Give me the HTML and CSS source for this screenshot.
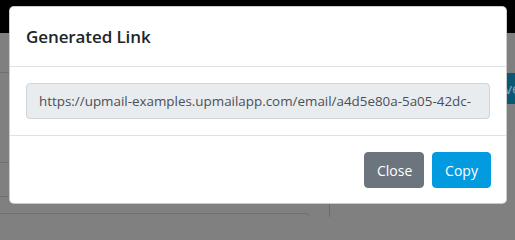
FILE: index.html
```html
<!DOCTYPE html>
<html lang="en">
<head>
<meta charset="utf-8">
<title>Generated Link</title>
<link rel="stylesheet" href="styles.css">
</head>
<body>
<div class="page">
  <div class="page-top"></div>
  <div class="page-main">
    <div class="left-col">
      <div class="row row-a"></div>
      <div class="row row-b"></div>
      <div class="row row-c"></div>
      <div class="box"></div>
    </div>
    <div class="right-col">
      <span class="bg-btn">Save</span>
    </div>
  </div>
</div>

<div class="modal" role="dialog" aria-labelledby="modal-title">
  <div class="modal-header">
    <h5 class="modal-title" id="modal-title">Generated Link</h5>
  </div>
  <div class="modal-body">
    <div class="input-wrap">
      <input class="link-input" type="text" readonly value="https://upmail-examples.upmailapp.com/email/a4d5e80a-5a05-42dc-9b1e-7c3f2d8a6e41">
    </div>
  </div>
  <div class="modal-footer">
    <button class="btn btn-close" type="button">Close</button>
    <button class="btn btn-copy" type="button">Copy</button>
  </div>
</div>
</body>
</html>
```
FILE: styles.css
```css
* { box-sizing: border-box; }

html, body {
  margin: 0;
  padding: 0;
  width: 515px;
  height: 217px;
  overflow: hidden;
  background: #808080;
  font-family: "Open Sans", "Liberation Sans", sans-serif;
}

.page {
  display: flex;
  flex-direction: column;
  height: 217px;
  overflow: hidden;
}

.page-top {
  height: 33px;
  background: #000;
  flex: none;
}

.page-main {
  flex: 1;
  min-height: 0;
  display: flex;
  overflow: hidden;
}

.left-col {
  width: 330px;
  border-right: 1px solid #6c6c6c;
  display: flex;
  flex-direction: column;
}

.row { border-bottom: 1px solid #707070; flex: none; }
.row-a { height: 40px; }
.row-b { height: 90px; }
.row-c { height: 34px; }

.box {
  flex: none;
  margin-top: 16px;
  width: 309px;
  height: 3px;
  border: 1px solid #707070;
  border-left: none;
  border-bottom: none;
  border-radius: 0 5px 0 0;
}

.right-col {
  flex: 1;
  overflow: hidden;
  padding: 40px 0 0 150px;
}

.bg-btn {
  display: block;
  width: 80px;
  height: 31px;
  background: #0b5874;
  color: #7fa6b6;
  font-size: 15px;
  line-height: 31px;
  padding-left: 8px;
  white-space: nowrap;
}

/* Modal overlays the backdrop */
.modal {
  position: absolute;
  left: 9px;
  top: 6px;
  width: 498px;
  background: #fff;
  border: 1px solid rgba(0, 0, 0, 0.2);
  border-radius: 5px;
  display: flex;
  flex-direction: column;
}

.modal-header {
  padding: 16px 16px 15px;
  border-bottom: 1px solid #dee2e6;
}

.modal-title {
  margin: 0;
  font-size: 17px;
  font-weight: 600;
  line-height: 28px;
  color: #212529;
  letter-spacing: -0.1px;
}

.modal-body {
  padding: 16px;
}

.input-wrap {
  height: 36px;
  padding: 0 18px 0 12px;
  background: #e9ecef;
  border: 1px solid #ced4da;
  border-radius: 4px;
  display: flex;
  align-items: stretch;
}

.link-input {
  display: block;
  width: 100%;
  min-width: 0;
  margin: 0;
  padding: 0;
  font-family: inherit;
  font-size: 13.4px;
  color: #495057;
  background: transparent;
  border: none;
  outline: none;
}

.modal-footer {
  border-top: 1px solid #dee2e6;
  padding: 16px 15px 15px;
  display: flex;
  justify-content: flex-end;
  gap: 8px;
}

.btn {
  height: 36px;
  padding: 0 12px;
  font-family: inherit;
  font-size: 14px;
  color: #fff;
  border: 1px solid transparent;
  border-radius: 4px;
  cursor: pointer;
}

.btn-close {
  width: 60px;
  background: #6c757d;
  border-color: #6c757d;
}

.btn-copy {
  width: 59px;
  background: #039be0;
  border-color: #039be0;
}
```
